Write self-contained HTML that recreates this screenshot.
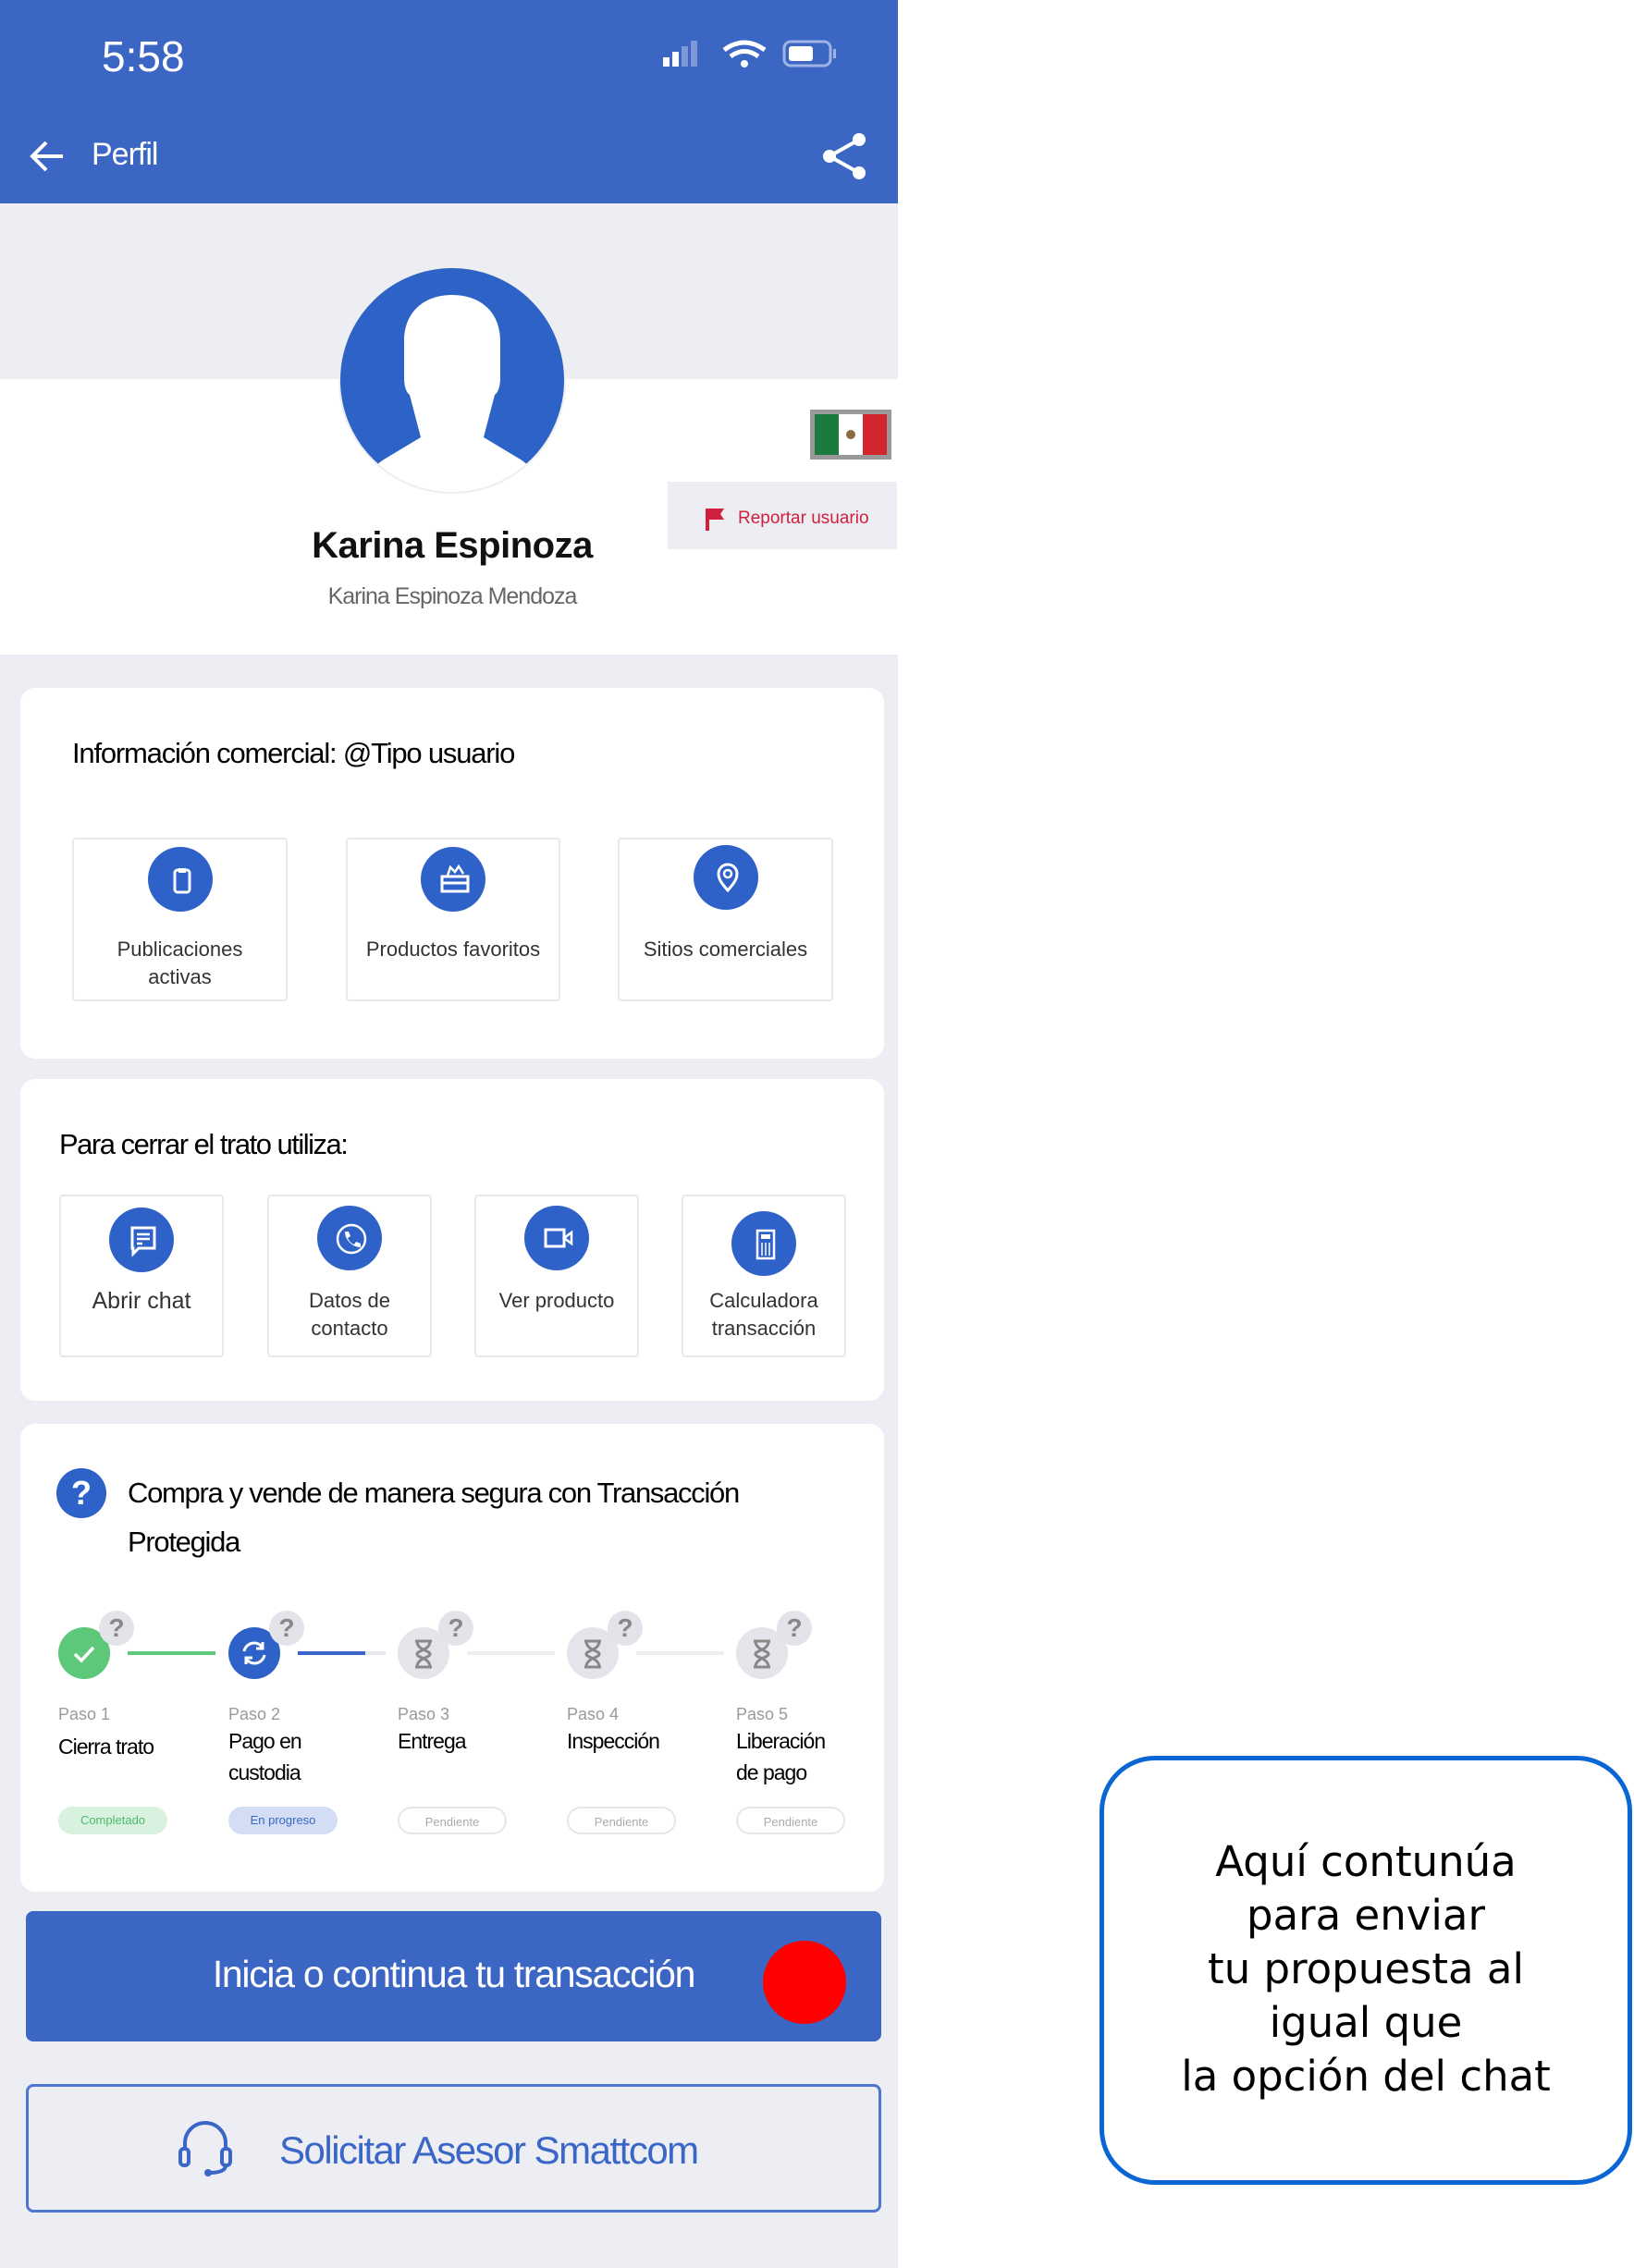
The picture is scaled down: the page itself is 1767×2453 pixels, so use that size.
<!DOCTYPE html>
<html><head><meta charset="utf-8"><style>
*{margin:0;padding:0;box-sizing:border-box}
body{width:1767px;height:2453px;background:#fff;position:relative;font-family:"Liberation Sans",sans-serif;overflow:hidden}
.a{position:absolute}
.phone{left:0;top:0;width:971px;height:2453px;background:#eceef3}
.card{background:#fff;border-radius:16px}
.tile{background:#fff;border:2px solid #e6e8ee;border-radius:4px;text-align:center;color:#333;font-size:22px;line-height:30px}
.ic{position:absolute;left:50%;border-radius:50%;background:#2f62c8;transform:translateX(-50%)}
.lbl{position:absolute;left:0;right:0}
.step{position:absolute;width:56px;height:56px;border-radius:50%}
.q{position:absolute;width:38px;height:38px;border-radius:50%;background:#e2e4ea;color:#888;font-size:28px;font-weight:bold;text-align:center;line-height:38px}
.paso{position:absolute;font-size:18px;color:#999}
.st{position:absolute;font-size:23px;color:#000;line-height:34px;letter-spacing:-1px}
.badge{position:absolute;width:118px;height:30px;border-radius:15px;font-size:13px;text-align:center;line-height:30px}
.pend{border:2px solid #e4e6ec;color:#aaa;background:#fff}
.line{position:absolute;height:4px;top:1786px}
</style></head><body>
<div class="a phone"></div>
<div class="a" style="left:0;top:0;width:971px;height:220px;background:#3c66c4"></div>
<div class="a" style="left:110px;top:34px;color:#fff;font-size:46px">5:58</div>
<svg class="a" style="left:715px;top:42px" width="200" height="36" viewBox="0 0 200 36">
<rect x="2" y="20" width="7" height="10" fill="#fff"/><rect x="12" y="14" width="7" height="16" fill="#fff"/><rect x="22" y="8" width="7" height="22" fill="#7d97d8"/><rect x="32" y="2" width="7" height="28" fill="#7d97d8"/>
<path d="M68 12 Q90 -4 112 12" stroke="#fff" stroke-width="5" fill="none"/><path d="M75 19 Q90 8 105 19" stroke="#fff" stroke-width="5" fill="none"/><circle cx="90" cy="27" r="4" fill="#fff"/>
<rect x="133" y="3" width="50" height="26" rx="7" stroke="#9fb3e4" stroke-width="3" fill="none"/><rect x="138" y="8" width="26" height="16" rx="3" fill="#fff"/><rect x="186" y="11" width="3" height="10" fill="#9fb3e4"/>
</svg>
<svg class="a" style="left:30px;top:148px" width="42" height="42" viewBox="0 0 42 42"><path d="M38 21H6M20 6L5 21l15 15" stroke="#fff" stroke-width="4" fill="none"/></svg>
<div class="a" style="left:99px;top:148px;color:#fff;font-size:34px;letter-spacing:-1px">Perfil</div>
<svg class="a" style="left:888px;top:142px" width="52" height="54" viewBox="0 0 52 54"><circle cx="41" cy="9" r="7" fill="#fff"/><circle cx="9" cy="27" r="7" fill="#fff"/><circle cx="41" cy="45" r="7" fill="#fff"/><path d="M41 9L9 27L41 45" stroke="#fff" stroke-width="4" fill="none"/></svg>
<div class="a" style="left:0;top:410px;width:971px;height:298px;background:#fff"></div>
<svg class="a" style="left:365px;top:287px" width="248" height="250" viewBox="0 0 248 250">
<defs><clipPath id="c"><circle cx="124" cy="124" r="122"/></clipPath></defs>
<circle cx="124" cy="124" r="122" fill="#2d63c6"/>
<g clip-path="url(#c)"><path d="M124 32c-30 0-52 18-52 50v40c0 10 3 16 6 18l12 46-40 24c-16 10-26 30-26 60h200c0-30-10-50-26-60l-40-24 12-46c3-2 6-8 6-18V82c0-32-22-50-52-50z" fill="#fff"/></g>
<circle cx="124" cy="124" r="122" fill="none" stroke="#eee" stroke-width="2"/>
</svg>
<svg class="a" style="left:876px;top:443px" width="88" height="54" viewBox="0 0 88 54"><rect width="88" height="54" fill="#999"/><rect x="5" y="5" width="26" height="44" fill="#1d7a3e"/><rect x="31" y="5" width="26" height="44" fill="#fff"/><rect x="57" y="5" width="26" height="44" fill="#d3262c"/><circle cx="44" cy="27" r="5" fill="#8a6b3d"/></svg>
<div class="a" style="left:722px;top:521px;width:248px;height:73px;background:#eceef3"></div>
<svg class="a" style="left:762px;top:548px" width="24" height="26" viewBox="0 0 24 26"><path d="M3 2v24" stroke="#d21f3c" stroke-width="4"/><path d="M4 2h17l-4 6 4 6H4z" fill="#d21f3c"/></svg>
<div class="a" style="left:798px;top:550px;font-size:19px;color:#d21f3c">Reportar usuario</div>
<div class="a" style="left:0;width:978px;top:568px;text-align:center;font-size:40px;font-weight:bold;color:#111;letter-spacing:-0.5px">Karina Espinoza</div>
<div class="a" style="left:0;width:978px;top:631px;text-align:center;font-size:25px;color:#666;letter-spacing:-1px">Karina Espinoza Mendoza</div>

<div class="a card" style="left:22px;top:744px;width:934px;height:401px"></div>
<div class="a" style="left:78px;top:797px;font-size:31px;color:#000;letter-spacing:-1.2px">Información comercial: @Tipo usuario</div>
<div class="a tile" style="left:78px;top:906px;width:233px;height:177px"><div class="ic" style="top:8px;width:70px;height:70px"></div>
<svg class="a" style="left:101px;top:28px" width="32" height="32" viewBox="0 0 32 32"><rect x="8" y="5" width="16" height="24" rx="3" stroke="#fff" stroke-width="3" fill="none"/><rect x="12" y="3" width="8" height="5" fill="#fff"/></svg>
<div class="lbl" style="top:104px">Publicaciones<br>activas</div></div>
<div class="a tile" style="left:374px;top:906px;width:232px;height:177px"><div class="ic" style="top:8px;width:70px;height:70px"></div>
<svg class="a" style="left:98px;top:26px" width="36" height="34" viewBox="0 0 36 34"><path d="M4 14h28v16H4zM4 21h28" stroke="#fff" stroke-width="3" fill="none"/><path d="M10 13l3-9 5 5 4-6 5 8" stroke="#fff" stroke-width="2.5" fill="none"/></svg>
<div class="lbl" style="top:104px">Productos favoritos</div></div>
<div class="a tile" style="left:668px;top:906px;width:233px;height:177px"><div class="ic" style="top:6px;width:70px;height:70px"></div>
<svg class="a" style="left:101px;top:24px" width="32" height="34" viewBox="0 0 32 34"><path d="M16 31C8 22 6 18 6 13a10 10 0 0120 0c0 5-2 9-10 18z" stroke="#fff" stroke-width="3" fill="none"/><circle cx="16" cy="13" r="4" stroke="#fff" stroke-width="2.5" fill="none"/></svg>
<div class="lbl" style="top:104px">Sitios comerciales</div></div>

<div class="a card" style="left:22px;top:1167px;width:934px;height:348px"></div>
<div class="a" style="left:64px;top:1220px;font-size:31px;color:#000;letter-spacing:-1.5px">Para cerrar el trato utiliza:</div>
<div class="a tile" style="left:64px;top:1292px;width:178px;height:176px"><div class="ic" style="top:12px;width:70px;height:70px"></div>
<svg class="a" style="left:72px;top:30px" width="34" height="36" viewBox="0 0 34 36"><path d="M5 4h24v22H12l-6 6v-6H5z" stroke="#fff" stroke-width="3" fill="none"/><path d="M10 11h14M10 16h14M10 21h6" stroke="#fff" stroke-width="2.5"/></svg>
<div class="lbl" style="top:98px;font-size:25px">Abrir chat</div></div>
<div class="a tile" style="left:289px;top:1292px;width:178px;height:176px"><div class="ic" style="top:10px;width:70px;height:70px"></div>
<svg class="a" style="left:70px;top:28px" width="38" height="36" viewBox="0 0 38 36"><circle cx="19" cy="18" r="15" stroke="#fff" stroke-width="2.5" fill="none"/><path d="M12 10l4 0 2 5-3 2c2 4 4 6 7 7l2-3 5 2v4c-9 0-17-8-17-17z" fill="#fff"/></svg>
<div class="lbl" style="top:98px">Datos de<br>contacto</div></div>
<div class="a tile" style="left:513px;top:1292px;width:178px;height:176px"><div class="ic" style="top:10px;width:70px;height:70px"></div>
<svg class="a" style="left:70px;top:28px" width="38" height="34" viewBox="0 0 38 34"><rect x="5" y="8" width="20" height="18" stroke="#fff" stroke-width="3" fill="none"/><path d="M25 17l8-6v12z" stroke="#fff" stroke-width="2.5" fill="none"/></svg>
<div class="lbl" style="top:98px">Ver producto</div></div>
<div class="a tile" style="left:737px;top:1292px;width:178px;height:176px"><div class="ic" style="top:16px;width:70px;height:70px"></div>
<svg class="a" style="left:74px;top:34px" width="30" height="36" viewBox="0 0 30 36"><rect x="6" y="3" width="18" height="30" stroke="#fff" stroke-width="2.5" fill="none"/><rect x="10" y="7" width="10" height="5" fill="#fff"/><path d="M11 16v14M15 16v14M19 16v14" stroke="#fff" stroke-width="1.5"/></svg>
<div class="lbl" style="top:98px">Calculadora<br>transacción</div></div>

<div class="a card" style="left:22px;top:1540px;width:934px;height:506px"></div>
<div class="a" style="left:61px;top:1588px;width:54px;height:54px;border-radius:50%;background:#2f62c8;color:#fff;font-size:36px;font-weight:bold;text-align:center;line-height:54px">?</div>
<div class="a" style="left:138px;top:1588px;font-size:31px;color:#000;line-height:53px;letter-spacing:-1.3px">Compra y vende de manera segura con Transacción<br>Protegida</div>

<div class="line" style="left:138px;width:95px;background:#5dc77a"></div>
<div class="line" style="left:322px;width:73px;background:#3a66c7"></div>
<div class="line" style="left:395px;width:22px;background:#e6e8ee"></div>
<div class="line" style="left:505px;width:95px;background:#eceef2"></div>
<div class="line" style="left:688px;width:95px;background:#eceef2"></div>

<div class="step" style="left:63px;top:1760px;background:#5dc77a"></div>
<svg class="a" style="left:73px;top:1770px" width="36" height="36" viewBox="0 0 36 36"><path d="M8 19l7 7 13-14" stroke="#fff" stroke-width="3.5" fill="none"/></svg>
<div class="step" style="left:247px;top:1760px;background:#2f62c8"></div>
<svg class="a" style="left:257px;top:1770px" width="36" height="36" viewBox="0 0 36 36"><path d="M7 16a11 11 0 0120-4M29 20a11 11 0 01-20 4" stroke="#fff" stroke-width="3" fill="none"/><path d="M27 6v7h-7M9 30v-7h7" stroke="#fff" stroke-width="3" fill="none"/></svg>
<div class="step" style="left:430px;top:1760px;background:#e3e5ea"></div>
<div class="step" style="left:613px;top:1760px;background:#e3e5ea"></div>
<div class="step" style="left:796px;top:1760px;background:#e3e5ea"></div>
<svg class="a" style="left:443px;top:1772px" width="30" height="34" viewBox="0 0 30 34"><path d="M6 3h18M6 31h18M8 3c0 10 14 10 14 14s-14 4-14 14M22 3c0 10-14 10-14 14s14 4 14 14" stroke="#888" stroke-width="3" fill="none"/></svg>
<svg class="a" style="left:626px;top:1772px" width="30" height="34" viewBox="0 0 30 34"><path d="M6 3h18M6 31h18M8 3c0 10 14 10 14 14s-14 4-14 14M22 3c0 10-14 10-14 14s14 4 14 14" stroke="#888" stroke-width="3" fill="none"/></svg>
<svg class="a" style="left:809px;top:1772px" width="30" height="34" viewBox="0 0 30 34"><path d="M6 3h18M6 31h18M8 3c0 10 14 10 14 14s-14 4-14 14M22 3c0 10-14 10-14 14s14 4 14 14" stroke="#888" stroke-width="3" fill="none"/></svg>
<div class="q" style="left:107px;top:1742px">?</div>
<div class="q" style="left:291px;top:1742px">?</div>
<div class="q" style="left:474px;top:1742px">?</div>
<div class="q" style="left:657px;top:1742px">?</div>
<div class="q" style="left:840px;top:1742px">?</div>

<div class="paso" style="left:63px;top:1844px">Paso 1</div>
<div class="paso" style="left:247px;top:1844px">Paso 2</div>
<div class="paso" style="left:430px;top:1844px">Paso 3</div>
<div class="paso" style="left:613px;top:1844px">Paso 4</div>
<div class="paso" style="left:796px;top:1844px">Paso 5</div>
<div class="st" style="left:63px;top:1872px">Cierra trato</div>
<div class="st" style="left:247px;top:1866px">Pago en<br>custodia</div>
<div class="st" style="left:430px;top:1866px">Entrega</div>
<div class="st" style="left:613px;top:1866px">Inspección</div>
<div class="st" style="left:796px;top:1866px">Liberación<br>de pago</div>
<div class="badge" style="left:63px;top:1954px;background:#d9f2e0;color:#4cb96a">Completado</div>
<div class="badge" style="left:247px;top:1954px;background:#d3def4;color:#3a66c7">En progreso</div>
<div class="badge pend" style="left:430px;top:1954px">Pendiente</div>
<div class="badge pend" style="left:613px;top:1954px">Pendiente</div>
<div class="badge pend" style="left:796px;top:1954px">Pendiente</div>

<div class="a" style="left:28px;top:2067px;width:925px;height:141px;background:#3c66c4;border-radius:8px"></div>
<div class="a" style="left:28px;top:2112px;width:925px;text-align:center;color:#fff;font-size:41px;letter-spacing:-1.3px">Inicia o continua tu transacción</div>
<div class="a" style="left:825px;top:2099px;width:90px;height:90px;border-radius:50%;background:#ff0000"></div>

<div class="a" style="left:28px;top:2254px;width:925px;height:139px;border:3px solid #4f77cf;border-radius:8px"></div>
<svg class="a" style="left:190px;top:2292px" width="70" height="64" viewBox="0 0 70 64"><path d="M10 34V26a22 22 0 0144 0v8" stroke="#3a66c7" stroke-width="4" fill="none"/><rect x="5" y="32" width="9" height="18" rx="4" stroke="#3a66c7" stroke-width="4" fill="none"/><rect x="50" y="32" width="9" height="18" rx="4" stroke="#3a66c7" stroke-width="4" fill="none"/><path d="M54 50c0 6-8 8-18 8" stroke="#3a66c7" stroke-width="4" fill="none"/><circle cx="35" cy="58" r="4" fill="#3a66c7"/></svg>
<div class="a" style="left:302px;top:2302px;color:#3a66c7;font-size:42px;letter-spacing:-1.5px">Solicitar Asesor Smattcom</div>

<div class="a" style="left:1189px;top:1899px;width:576px;height:464px;border:5px solid #0a66d4;border-radius:60px"></div>
<div class="a" style="left:1189px;top:1985px;width:576px;text-align:center;line-height:58px;color:#000;font-family:'DejaVu Sans','Liberation Sans',sans-serif;font-size:45px">Aquí contunúa<br>para enviar<br>tu propuesta al<br>igual que<br>la opción del chat</div>
</body></html>
